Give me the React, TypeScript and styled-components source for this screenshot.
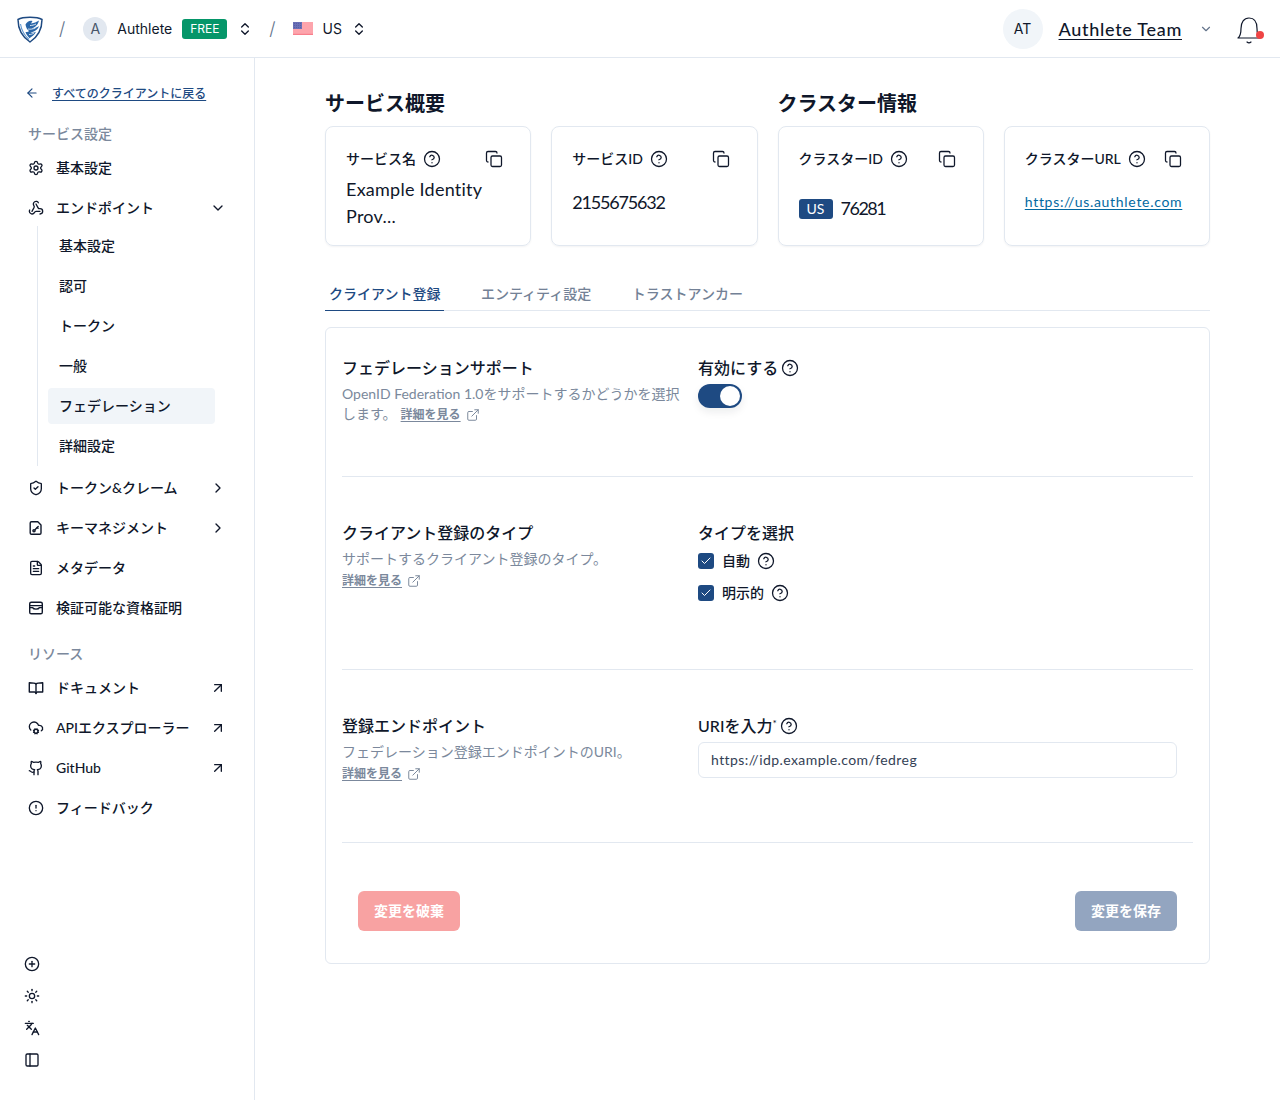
import React from 'react'
import styled, { createGlobalStyle } from 'styled-components'
import {
  ArrowLeft, ArrowUpRight, Check, ChevronDown, ChevronRight, ChevronsUpDown,
  CircleAlert, CircleHelp, CirclePlus, CloudCog, Copy, ExternalLink, FileText,
  Github, Languages, PanelLeft, Settings, ShieldCheck, Sun, Webhook,
} from 'lucide-react'

const navy = '#1e4a82'
const ink = '#0f172a'
const muted = '#64748b'
const line = '#e2e8f0'

const GlobalStyle = createGlobalStyle`
  * { box-sizing: border-box; }
  html, body { margin: 0; padding: 0; background: #fff; }
  body {
    font-family: Lato, "Noto Sans CJK JP", sans-serif;
    color: ${ink};
    font-size: 14px;
  }
`

const Page = styled.div`
  width: 1280px;
  height: 1100px;
  display: flex;
  flex-direction: column;
  overflow: hidden;
`

const TopBar = styled.header`
  height: 58px;
  flex: none;
  display: flex;
  align-items: center;
  justify-content: space-between;
  border-bottom: 1px solid ${line};
  font-family: Inter, "Noto Sans CJK JP", sans-serif;
`

const BarGroup = styled.div`
  display: flex;
  align-items: center;
`

const LogoSlot = styled.div`
  width: 28px;
  height: 28px;
  margin-left: 16px;
  display: flex;
`

const Slash = styled.span<{ $left: number; $right: number }>`
  margin: 0 ${p => p.$right}px 0 ${p => p.$left}px;
  color: ${muted};
  font-size: 18px;
  font-weight: 300;
`

const SmallAvatar = styled.div`
  width: 24px;
  height: 24px;
  border-radius: 50%;
  background: #e2e8f0;
  color: #475569;
  font-size: 14px;
  display: flex;
  align-items: center;
  justify-content: center;
`

const BarText = styled.span<{ $left: number }>`
  margin-left: ${p => p.$left}px;
  font-size: 14px;
  font-weight: 400;
`

const PlanBadge = styled.span`
  margin-left: 10px;
  width: 45px;
  height: 20px;
  border-radius: 3px;
  background: #059669;
  color: #fff;
  font-size: 12px;
  display: flex;
  align-items: center;
  justify-content: center;
`

const Stepper = styled(ChevronsUpDown)<{ $left: number }>`
  margin-left: ${p => p.$left}px;
  width: 16px;
  height: 16px;
  color: ${ink};
`

const TeamAvatar = styled.div`
  width: 40px;
  height: 40px;
  border-radius: 50%;
  background: #f1f5f9;
  font-size: 14px;
  font-weight: 400;
  display: flex;
  align-items: center;
  justify-content: center;
`

const TeamName = styled.span`
  margin-left: 16px;
  font-family: Lato, sans-serif;
  font-size: 18px;
  font-weight: 500;
  letter-spacing: 0.7px;
  text-decoration: underline;
  text-underline-offset: 3px;
  text-decoration-thickness: 1px;
`

const TeamChevron = styled(ChevronDown)`
  margin-left: 17px;
  width: 14px;
  height: 14px;
  color: ${muted};
`

const BellWrap = styled.div`
  position: relative;
  width: 26px;
  height: 30px;
  margin: 0 18px 0 23px;
`

const BellDot = styled.span`
  position: absolute;
  right: -2px;
  top: 17px;
  width: 8px;
  height: 8px;
  border-radius: 50%;
  background: #ef4444;
`

const Body = styled.div`
  flex: 1;
  display: flex;
  min-height: 0;
`

const Sidebar = styled.aside`
  width: 255px;
  flex: none;
  border-right: 1px solid ${line};
  display: flex;
  flex-direction: column;
`

const BackLink = styled.div`
  height: 20px;
  margin: 25px 0 0 25px;
  display: flex;
  align-items: center;
  gap: 13px;
  color: ${navy};
  font-size: 12px;
  font-weight: 500;
  svg { width: 14px; height: 14px; }
  span {
    padding-bottom: 2px;
    text-decoration: underline;
    text-underline-offset: 2px;
  }
`

const NavLabel = styled.div<{ $top: number }>`
  height: 20px;
  line-height: 20px;
  margin: ${p => p.$top}px 0 4px 28px;
  color: ${muted};
  font-size: 14px;
  font-weight: 500;
  opacity: 0.85;
`

const NavItem = styled.div`
  height: 40px;
  flex: none;
  width: 226px;
  margin-left: 28px;
  display: flex;
  align-items: center;
  gap: 12px;
  font-size: 14px;
  font-weight: 500;
  svg { width: 16px; height: 16px; flex: none; }
`

const NavText = styled.span`
  flex: 1;
  padding-bottom: 2px;
  white-space: nowrap;
`

const NavEnd = styled.span`
  width: 16px;
  margin-right: 28px;
  display: flex;
`

const SubNav = styled.div`
  height: 240px;
  flex: none;
  margin: -2px 0 2px 37px;
  padding: 2px 0 2px 10px;
  border-left: 1px solid ${line};
  display: flex;
  flex-direction: column;
  gap: 4px;
`

const SubItem = styled.div<{ $active?: boolean }>`
  width: 167px;
  height: 36px;
  padding: 0 0 2px 11px;
  border-radius: 4px;
  display: flex;
  align-items: center;
  font-size: 14px;
  font-weight: 500;
  background: ${p => (p.$active ? '#f1f5f9' : 'transparent')};
`

const SideFoot = styled.div`
  margin-top: auto;
  padding: 0 0 32px 24px;
  display: flex;
  flex-direction: column;
  gap: 16px;
  svg { width: 16px; height: 16px; display: block; }
`

const Main = styled.main`
  flex: 1;
  padding: 32px 70px 0;
`

const Overview = styled.div`
  display: grid;
  grid-template-columns: 1fr 1fr;
  gap: 20px;
`

const Heading = styled.h2`
  margin: 0 0 8px;
  padding-bottom: 2px;
  height: 28px;
  font-size: 20px;
  line-height: 26px;
  font-weight: 700;
`

const CardRow = styled.div`
  display: grid;
  grid-template-columns: 1fr 1fr;
  gap: 20px;
`

const Card = styled.div`
  height: 120px;
  padding: 22px 20px 0;
  border: 1px solid ${line};
  border-radius: 8px;
  box-shadow: 0 1px 2px rgba(15, 23, 42, 0.05);
`

const CardHead = styled.div`
  height: 20px;
  padding-right: 7px;
  display: flex;
  align-items: center;
  justify-content: space-between;
  svg { width: 18px; height: 18px; flex: none; }
`

const CardLabel = styled.div`
  display: flex;
  align-items: center;
  gap: 7px;
  font-size: 14px;
  font-weight: 500;
  white-space: nowrap;
  span { padding-bottom: 2px; }
`

const CardValue = styled.div<{ $top: number; $spacing: number }>`
  margin-top: ${p => p.$top}px;
  font-size: 18px;
  line-height: 27px;
  letter-spacing: ${p => p.$spacing}px;
  display: flex;
  align-items: center;
  gap: 8px;
`

const CardLines = styled.div`
  margin-top: 7px;
  font-size: 18px;
  line-height: 27px;
  letter-spacing: 0.25px;
`

const RegionBadge = styled.span`
  width: 34px;
  height: 20px;
  border-radius: 3px;
  background: ${navy};
  color: #fff;
  font-size: 14px;
  line-height: 20px;
  letter-spacing: 0;
  text-align: center;
`

const CardLink = styled.a`
  display: block;
  margin-top: 23px;
  font-size: 14px;
  line-height: 20px;
  letter-spacing: 0.7px;
  color: #0369a1;
  text-decoration: underline;
  text-underline-offset: 2px;
  white-space: nowrap;
`

const Tabs = styled.div`
  margin-top: 30px;
  height: 35px;
  display: flex;
  gap: 32.5px;
  border-bottom: 1px solid ${line};
`

const Tab = styled.div<{ $active?: boolean }>`
  height: 35px;
  padding: 0 4px;
  line-height: 36px;
  font-size: 14px;
  font-weight: 500;
  color: ${p => (p.$active ? navy : muted)};
  border-bottom: ${p => (p.$active ? `1px solid ${navy}` : 'none')};
  opacity: ${p => (p.$active ? 1 : 0.9)};
`

const Panel = styled.section`
  margin-top: 16px;
  height: 637px;
  padding: 0 16px;
  border: 1px solid ${line};
  border-radius: 6px;
`

const SettingRow = styled.div<{ $top: number; $height: number }>`
  height: ${p => p.$height}px;
  padding-top: ${p => p.$top}px;
  border-bottom: 1px solid ${line};
  display: grid;
  grid-template-columns: 356px 1fr;
`

const SettingInfo = styled.div`
  width: 340px;
`

const SettingTitle = styled.div`
  font-size: 16px;
  line-height: 20px;
  font-weight: 500;
`

const SettingDesc = styled.div`
  margin-top: 6px;
  color: ${muted};
  opacity: 0.85;
  font-size: 14px;
  line-height: 20px;
`

const MoreLink = styled.a<{ $block?: boolean }>`
  display: ${p => (p.$block ? 'flex' : 'inline-flex')};
  align-items: center;
  gap: 5px;
  margin: ${p => (p.$block ? '2px 0 0' : '0 0 0 4px')};
  color: ${muted};
  font-size: 12px;
  font-weight: 700;
  span { text-decoration: underline; text-underline-offset: 2px; }
  svg { width: 14px; height: 14px; }
`

const FieldLabel = styled.div`
  height: 20px;
  display: flex;
  align-items: center;
  gap: 3px;
  font-size: 16px;
  font-weight: 500;
  svg { width: 18px; height: 18px; }
  span { padding-bottom: 2px; }
  sup { font-size: 10px; line-height: 1; align-self: flex-start; margin: 2px 0 0 -3px; }
`

const Toggle = styled.div`
  width: 44px;
  height: 24px;
  margin-top: 6px;
  padding: 2px;
  border-radius: 12px;
  background: ${navy};
  display: flex;
  justify-content: flex-end;
  box-shadow: 0 4px 8px rgba(15, 23, 42, 0.08);
`

const Knob = styled.span`
  width: 20px;
  height: 20px;
  border-radius: 50%;
  background: #fff;
`

const CheckRow = styled.div<{ $top: number }>`
  margin-top: ${p => p.$top}px;
  height: 20px;
  display: flex;
  align-items: center;
  font-size: 14px;
  font-weight: 500;
  > svg { width: 18px; height: 18px; margin-left: 7px; }
`

const CheckText = styled.span`
  padding-bottom: 2px;
`

const CheckBox = styled.span`
  width: 16px;
  height: 16px;
  margin-right: 8px;
  border-radius: 3px;
  background: ${navy};
  color: #fff;
  display: flex;
  align-items: center;
  justify-content: center;
  svg { width: 12px; height: 12px; }
`

const UriInput = styled.input`
  display: block;
  width: 479px;
  height: 36px;
  margin-top: 6px;
  padding: 0 12px 2px;
  border: 1px solid ${line};
  border-radius: 6px;
  color: #334155;
  font: 14px Lato, sans-serif;
  letter-spacing: 0.43px;
  outline: none;
`

const PanelFoot = styled.div`
  padding: 48px 16px 0;
  display: flex;
  justify-content: space-between;
`

const ActionButton = styled.button<{ $tone: string }>`
  width: 102px;
  height: 40px;
  padding: 0 0 2px;
  border: 0;
  border-radius: 6px;
  background: ${p => p.$tone};
  color: #fff;
  font: 700 14px Lato, "Noto Sans CJK JP", sans-serif;
`

const Logo = () => (
  <svg viewBox="0 0 28 28" width="28" height="28" fill="none">
    <path d="M2 4.5C7 1.5 21 1.5 26 4.5C26 14 23 21 14 27C5 21 2 14 2 4.5Z" stroke={navy} strokeWidth="1.5" />
    <path d="M9.5 9.5C11 6 14.5 5 16.5 6L15 8.5C18 8 20.5 7 23 5.5C22 10 19 12.5 15.5 13.5C18.5 13.5 21 12.5 23 11C21.5 15 18 17 14.5 17.5C16.5 18 18.5 17.5 20 16.8C18.5 20 15.5 22 13.5 23.2C11.5 21 10 19 9.5 17C11 17.2 12.5 16.8 13 16C11 14.5 9.8 12 9.5 9.5Z" fill="#2a66a8" />
    <path d="M14 10.5C16 10.5 18 10 20 9M12 14C14.5 14.5 17 14 19.5 13M13 19.5C15 19.5 16.5 19 18 18" stroke="#fff" strokeWidth="0.8" />
    <path d="M4.5 9C5.5 15.5 8.5 20.5 13 24.5" stroke="#5f96cf" strokeWidth="1.1" />
  </svg>
)

const Flag = () => (
  <svg viewBox="0 0 20 13" width="20" height="13">
    <rect width="20" height="13" fill="#fda4ac" />
    <rect y="11.8" width="20" height="1.2" fill="#f87f8c" />
    <rect width="9" height="7" fill="#6a70b6" />
    <path d="M1 1.5H8M1 3.5H8M1 5.5H8" stroke="#4f56a2" strokeWidth="0.7" strokeDasharray="1 1" />
  </svg>
)

const Bell = () => (
  <svg viewBox="0 0 26 30" width="26" height="30" fill="none" stroke={ink} strokeWidth="1.2" strokeLinecap="round" strokeLinejoin="round">
    <path d="M2 24C4.5 22 5 19 5 14.5C5 8 8 4 13 4C18 4 21 8 21 14.5C21 19 21.5 22 24 24Z" />
    <path d="M11 28C12 28.8 14 28.8 15 28" />
  </svg>
)

const CredentialIcon = () => (
  <svg viewBox="0 0 16 16" fill="none" stroke="currentColor" strokeWidth="1.4" strokeLinecap="round" strokeLinejoin="round">
    <rect x="1.7" y="2.2" width="12.6" height="11.6" rx="1.6" />
    <path d="M1.7 5.6H14.3" />
    <path d="M1.7 7.6H4.6C5.6 9.6 10.4 9.6 11.4 7.6H14.3" />
  </svg>
)

const KeyFileIcon = () => (
  <svg viewBox="0 0 16 16" fill="none" stroke="currentColor" strokeWidth="1.4" strokeLinecap="round" strokeLinejoin="round">
    <path d="M3.5 1.7H9.8L13 5V13C13 13.8 12.4 14.3 11.7 14.3H3.5C2.8 14.3 2.2 13.8 2.2 13V3C2.2 2.3 2.8 1.7 3.5 1.7Z" />
    <path d="M10.2 6.5L7.2 9.5" />
    <circle cx="6" cy="10.8" r="1.1" />
    <path d="M9.2 7.5L10 8.3" />
  </svg>
)

const BookIcon = () => (
  <svg viewBox="0 0 16 16" fill="none" stroke="currentColor" strokeWidth="1.4" strokeLinecap="round" strokeLinejoin="round">
    <path d="M8 4C7 3 5.5 2.7 1.3 2.7V12H6.5C7.3 12 8 12.6 8 13.6C8 12.6 8.7 12 9.5 12H14.7V2.7C10.5 2.7 9 3 8 4Z" />
    <path d="M8 4V13.6" />
  </svg>
)

const Help = () => <CircleHelp strokeWidth={1.7} />

const InfoCard = ({ label, children }: { label: string; children: React.ReactNode }) => (
  <Card>
    <CardHead>
      <CardLabel><span>{label}</span><Help /></CardLabel>
      <Copy strokeWidth={1.7} />
    </CardHead>
    {children}
  </Card>
)

const Details = ({ block }: { block?: boolean }) => (
  <MoreLink $block={block}>
    <span>詳細を見る</span>
    <ExternalLink strokeWidth={1.7} />
  </MoreLink>
)

const subItems = ['基本設定', '認可', 'トークン', '一般', 'フェデレーション', '詳細設定']

const App = () => (
  <>
    <GlobalStyle />
    <Page>
      <TopBar>
        <BarGroup>
          <LogoSlot><Logo /></LogoSlot>
          <Slash $left={15} $right={18}>/</Slash>
          <SmallAvatar>A</SmallAvatar>
          <BarText $left={10}>Authlete</BarText>
          <PlanBadge>FREE</PlanBadge>
          <Stepper $left={10} />
          <Slash $left={16} $right={17}>/</Slash>
          <Flag />
          <BarText $left={10}>US</BarText>
          <Stepper $left={9} />
        </BarGroup>
        <BarGroup>
          <TeamAvatar>AT</TeamAvatar>
          <TeamName>Authlete Team</TeamName>
          <TeamChevron />
          <BellWrap><Bell /><BellDot /></BellWrap>
        </BarGroup>
      </TopBar>
      <Body>
        <Sidebar>
          <BackLink><ArrowLeft /><span>すべてのクライアントに戻る</span></BackLink>
          <NavLabel $top={21}>サービス設定</NavLabel>
          <NavItem><Settings /><NavText>基本設定</NavText></NavItem>
          <NavItem>
            <Webhook /><NavText>エンドポイント</NavText>
            <NavEnd><ChevronDown /></NavEnd>
          </NavItem>
          <SubNav>
            {subItems.map(item => (
              <SubItem key={item} $active={item === 'フェデレーション'}>{item}</SubItem>
            ))}
          </SubNav>
          <NavItem>
            <ShieldCheck /><NavText>トークン&amp;クレーム</NavText>
            <NavEnd><ChevronRight /></NavEnd>
          </NavItem>
          <NavItem>
            <KeyFileIcon /><NavText>キーマネジメント</NavText>
            <NavEnd><ChevronRight /></NavEnd>
          </NavItem>
          <NavItem><FileText /><NavText>メタデータ</NavText></NavItem>
          <NavItem><CredentialIcon /><NavText>検証可能な資格証明</NavText></NavItem>
          <NavLabel $top={16}>リソース</NavLabel>
          <NavItem>
            <BookIcon /><NavText>ドキュメント</NavText>
            <NavEnd><ArrowUpRight /></NavEnd>
          </NavItem>
          <NavItem>
            <CloudCog /><NavText>APIエクスプローラー</NavText>
            <NavEnd><ArrowUpRight /></NavEnd>
          </NavItem>
          <NavItem>
            <Github /><NavText>GitHub</NavText>
            <NavEnd><ArrowUpRight /></NavEnd>
          </NavItem>
          <NavItem><CircleAlert /><NavText>フィードバック</NavText></NavItem>
          <SideFoot>
            <CirclePlus />
            <Sun />
            <Languages />
            <PanelLeft />
          </SideFoot>
        </Sidebar>
        <Main>
          <Overview>
            <div>
              <Heading>サービス概要</Heading>
              <CardRow>
                <InfoCard label="サービス名">
                  <CardLines>Example Identity<br />Prov...</CardLines>
                </InfoCard>
                <InfoCard label="サービスID">
                  <CardValue $top={20} $spacing={-1.2}>2155675632</CardValue>
                </InfoCard>
              </CardRow>
            </div>
            <div>
              <Heading>クラスター情報</Heading>
              <CardRow>
                <InfoCard label="クラスターID">
                  <CardValue $top={26} $spacing={-1.5}><RegionBadge>US</RegionBadge>76281</CardValue>
                </InfoCard>
                <InfoCard label="クラスターURL">
                  <CardLink>https://us.authlete.com</CardLink>
                </InfoCard>
              </CardRow>
            </div>
          </Overview>
          <Tabs>
            <Tab $active>クライアント登録</Tab>
            <Tab>エンティティ設定</Tab>
            <Tab>トラストアンカー</Tab>
          </Tabs>
          <Panel>
            <SettingRow $top={30} $height={149}>
              <SettingInfo>
                <SettingTitle>フェデレーションサポート</SettingTitle>
                <SettingDesc>
                  OpenID Federation 1.0をサポートするかどうかを選択します。
                  <Details />
                </SettingDesc>
              </SettingInfo>
              <div>
                <FieldLabel><span>有効にする</span><Help /></FieldLabel>
                <Toggle><Knob /></Toggle>
              </div>
            </SettingRow>
            <SettingRow $top={46} $height={193}>
              <SettingInfo>
                <SettingTitle>クライアント登録のタイプ</SettingTitle>
                <SettingDesc>
                  サポートするクライアント登録のタイプ。
                  <Details block />
                </SettingDesc>
              </SettingInfo>
              <div>
                <FieldLabel><span>タイプを選択</span></FieldLabel>
                <CheckRow $top={8}><CheckBox><Check strokeWidth={2} /></CheckBox><CheckText>自動</CheckText><Help /></CheckRow>
                <CheckRow $top={12}><CheckBox><Check strokeWidth={2} /></CheckBox><CheckText>明示的</CheckText><Help /></CheckRow>
              </div>
            </SettingRow>
            <SettingRow $top={46} $height={173}>
              <SettingInfo>
                <SettingTitle>登録エンドポイント</SettingTitle>
                <SettingDesc>
                  フェデレーション登録エンドポイントのURI。
                  <Details block />
                </SettingDesc>
              </SettingInfo>
              <div>
                <FieldLabel><span>URIを入力</span><sup>*</sup><Help /></FieldLabel>
                <UriInput readOnly value="https://idp.example.com/fedreg" />
              </div>
            </SettingRow>
            <PanelFoot>
              <ActionButton $tone="#f8a2a2">変更を破棄</ActionButton>
              <ActionButton $tone="#93a5c0">変更を保存</ActionButton>
            </PanelFoot>
          </Panel>
        </Main>
      </Body>
    </Page>
  </>
)

export default App
